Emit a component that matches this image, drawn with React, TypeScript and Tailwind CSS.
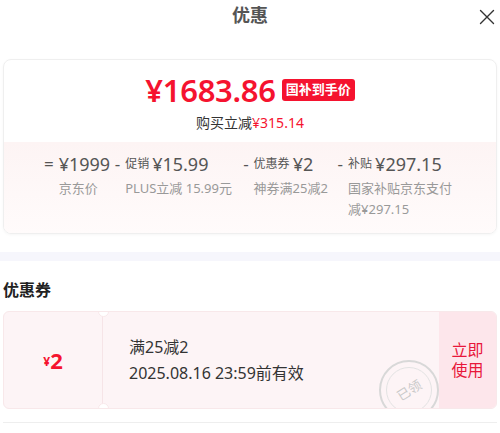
import React from "react";

const font = { fontFamily: '"Noto Sans", "Noto Sans CJK SC", sans-serif' };

const items = [
  { op: "=", tag: "", value: "¥1999", label: "京东价", w: "w-[50px]" },
  { op: "-", tag: "促销", value: "¥15.99", label: "PLUS立减 15.99元", w: "w-[112px]" },
  { op: "-", tag: "优惠券", value: "¥2", label: "神券满25减2", w: "w-[78px]" },
  { op: "-", tag: "补贴", value: "¥297.15", label: "国家补贴京东支付减¥297.15", w: "w-[108px]" },
];

const CloseIcon = () => (
  <svg width="16" height="16" viewBox="0 0 16 16" fill="none">
    <path d="M1.5 1.5L14.5 14.5M14.5 1.5L1.5 14.5" stroke="#333" strokeWidth="1.4" strokeLinecap="round" />
  </svg>
);

export default function App() {
  return (
    <div className="w-[500px] h-[433px] bg-white overflow-hidden" style={font}>
      {/* Header */}
      <div className="relative h-[31px] flex items-center justify-center">
        <span className="text-[18px] font-bold text-[#555]">优惠</span>
        <div className="absolute right-[5px] top-[9px]">
          <CloseIcon />
        </div>
      </div>

      {/* Price card */}
      <div className="px-[3px] pt-[28px]">
        <div className="rounded-[8px] border border-[#efefef] shadow-[0_1px_3px_rgba(0,0,0,0.04)] overflow-hidden">
          <div className="pt-[12px] pb-[9px] flex flex-col items-center">
            <div className="flex items-center gap-[6px] h-[36px]">
              <span className="text-[31px] font-semibold text-[#f5132f] leading-none tracking-[-0.3px]">
                ¥1683.86
              </span>
              <span className="px-[4px] h-[22px] flex items-center rounded-[3px] bg-[#f5132f] text-white text-[13px] font-bold">
                国补到手价
              </span>
            </div>
            <div className="mt-[5px] text-[14px] leading-[20px] text-[#333]">
              购买立减<span className="text-[#f5132f]">¥315.14</span>
            </div>
          </div>
          <div className="h-[91px] bg-gradient-to-b from-[#fdf4f4] to-[#fffbfb] pt-[10px] flex justify-center gap-[6px]">
            {items.map((it) => (
              <div key={it.value} className="flex gap-[5px]">
                <span className="text-[17px] leading-[24px] text-[#555]">{it.op}</span>
                <div className={`${it.w} flex flex-col`}>
                  <div className="flex items-center gap-[3px] h-[24px] text-[#555] whitespace-nowrap">
                    {it.tag && <span className="text-[12px]">{it.tag}</span>}
                    <span className="text-[18px]">{it.value}</span>
                  </div>
                  <div className="mt-[2px] text-[13px] leading-[21px] text-[#999]">{it.label}</div>
                </div>
              </div>
            ))}
          </div>
        </div>
      </div>

      {/* Divider band */}
      <div className="mt-[18px] h-[9px] bg-[#f6f6fc]" />

      {/* Coupons */}
      <div className="px-[3px]">
        <div className="mt-[17px] h-[24px] flex items-center text-[16px] font-bold text-[#222]">优惠券</div>
        <div className="relative mt-[9px] h-[98px] flex rounded-[6px] border border-[#f8e8ea] bg-[#fdf4f6] overflow-hidden">
          <div className="w-[99px] flex items-center justify-center border-r border-[#f6e4e7] text-[#f5132f]">
            <span className="text-[12px] font-bold mt-[4px]">¥</span>
            <span className="text-[22px] font-bold">2</span>
          </div>
          <div className="relative flex-1 flex flex-col justify-center pl-[26px] text-[16px] leading-[26px] text-[#333]">
            <span>满25减2</span>
            <span>2025.08.16 23:59前有效</span>
            <div className="absolute left-[276px] top-[48px] w-[60px] h-[60px] rounded-full border-[2px] border-[#d8d8d8] flex items-center justify-center">
              <div className="w-[46px] h-[46px] rounded-full border border-[#e2e2e2] flex items-center justify-center">
                <span className="text-[13px] text-[#c8c8c8] rotate-[-32deg]">已领</span>
              </div>
            </div>
          </div>
          <div className="relative w-[57px] bg-[#fde6eb] flex flex-col items-center justify-center text-[16px] leading-[20px] text-[#e8173a]">
            <span>立即</span>
            <span>使用</span>
          </div>
          <div className="absolute left-[94px] top-[-6px] w-[11px] h-[11px] rounded-full bg-white border border-[#f8e8ea]" />
          <div className="absolute left-[94px] bottom-[-6px] w-[11px] h-[11px] rounded-full bg-white border border-[#f8e8ea]" />
        </div>
        <div className="mt-[13px] h-px bg-[#eeeeee]" />
      </div>
    </div>
  );
}
